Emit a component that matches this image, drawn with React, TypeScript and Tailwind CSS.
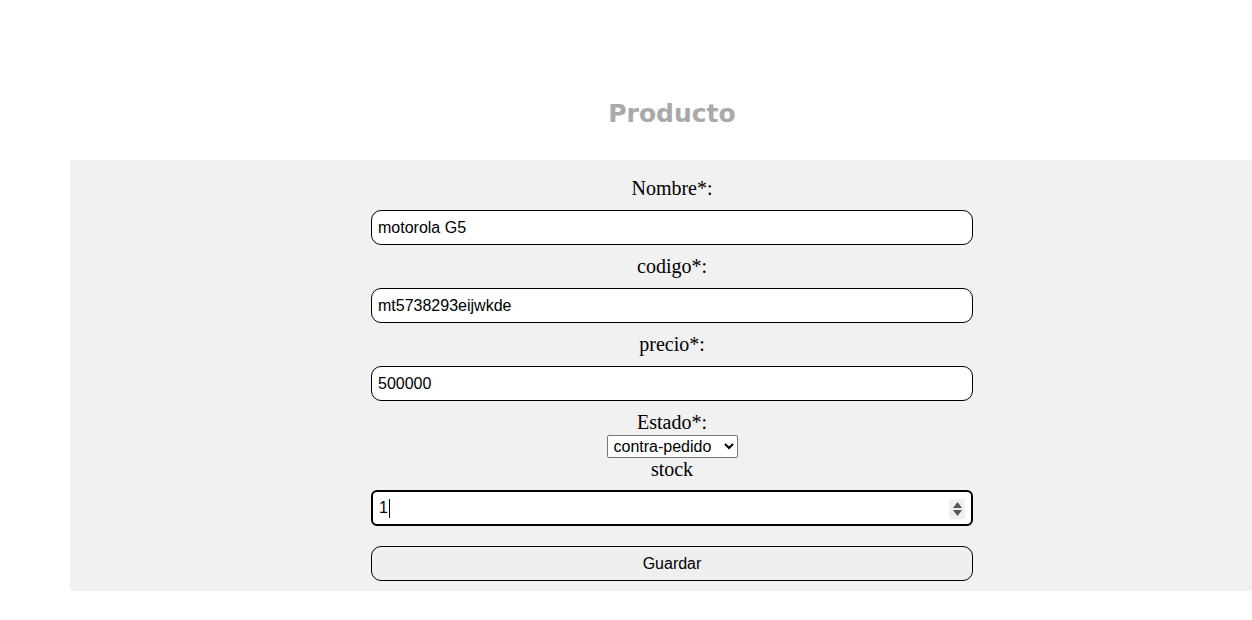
import React from "react";

const serif = { fontFamily: '"Liberation Serif", "Times New Roman", serif' };

function Label({ children }: { children: React.ReactNode }) {
  return (
    <div className="h-[22px] leading-[22px] text-[20px] text-black text-center" style={serif}>
      {children}
    </div>
  );
}

function TextInput({ value }: { value: string }) {
  return (
    <input
      readOnly
      value={value}
      className="block w-[602px] h-[35px] border border-black rounded-[10px] bg-white pl-[6px] text-[16px] text-black outline-none font-['Liberation_Sans',Arial,sans-serif]"
    />
  );
}

export default function App() {
  return (
    <div className="w-[1252px] h-[620px] overflow-hidden bg-white">
      <div className="ml-[70px] w-[1204px]">
        <div className="h-[160px] pt-[97px] text-center">
          <h1 className="text-[25px] leading-[34px] font-bold text-[#a9a9a9] font-['DejaVu_Sans',Verdana,sans-serif]">
            Producto
          </h1>
        </div>
        <div className="bg-[#f1f1f1] rounded-bl-[4px] pt-[17px] pb-[10px] flex flex-col items-center">
          <Label>Nombre*:</Label>
          <div className="mt-[11px]">
            <TextInput value="motorola G5" />
          </div>
          <div className="mt-[10px]">
            <Label>codigo*:</Label>
          </div>
          <div className="mt-[11px]">
            <TextInput value="mt5738293eijwkde" />
          </div>
          <div className="mt-[10px]">
            <Label>precio*:</Label>
          </div>
          <div className="mt-[11px]">
            <TextInput value="500000" />
          </div>
          <div className="mt-[10px]">
            <Label>Estado*:</Label>
          </div>
          <div className="mt-[2px]">
            <select
              defaultValue="contra-pedido"
              className="block h-[23px] w-[131px] border border-[#767676] rounded-[2px] bg-white text-[16px] text-black pl-[2px] font-['Liberation_Sans',Arial,sans-serif]"
            >
              <option value="disponible">disponible</option>
              <option value="contra-pedido">contra-pedido</option>
              <option value="agotado">agotado</option>
            </select>
          </div>
          <Label>stock</Label>
          <div className="mt-[10px] relative w-[602px] h-[36px] border-2 border-black rounded-[6px] bg-white flex items-center pl-[6px] font-['Liberation_Sans',Arial,sans-serif] text-[16px] text-black">
            <span>1</span>
            <span className="ml-[1px] w-[1px] h-[19px] bg-black" />
            <div className="absolute right-[6px] top-[7px] w-[16px] h-[20px] bg-[#efefef] flex flex-col items-center justify-center gap-[2px]">
              <svg width="9" height="6" viewBox="0 0 9 6">
                <path d="M4.5 0 L9 6 L0 6 Z" fill="#555" />
              </svg>
              <svg width="9" height="6" viewBox="0 0 9 6">
                <path d="M0 0 L9 0 L4.5 6 Z" fill="#555" />
              </svg>
            </div>
          </div>
          <button className="mt-[20px] w-[602px] h-[35px] border border-black rounded-[10px] bg-[#efefef] text-[16px] text-black font-['Liberation_Sans',Arial,sans-serif]">
            Guardar
          </button>
        </div>
      </div>
    </div>
  );
}
